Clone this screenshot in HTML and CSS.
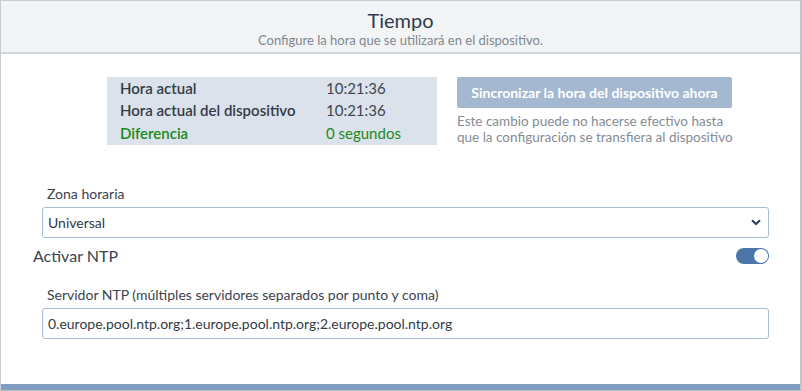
FILE: index.html
```html
<!DOCTYPE html>
<html lang="es">
<head>
  <meta charset="UTF-8">
  <title>Tiempo</title>
  <link rel="stylesheet" href="styles.css">
</head>
<body>

<div class="panel">
  <header class="panel-head">
    <h1>Tiempo</h1>
    <p>Configure la hora que se utilizará en el dispositivo.</p>
  </header>

  <div class="panel-body">
    <!-- Hora -->
    <div class="time-row">
      <table class="time-table">
        <tr><td>Hora actual</td><td>10:21:36</td></tr>
        <tr><td>Hora actual del dispositivo</td><td>10:21:36</td></tr>
        <tr class="diff"><td>Diferencia</td><td>0 segundos</td></tr>
      </table>
      <div class="sync">
        <button class="sync-btn" disabled>Sincronizar la hora del dispositivo ahora</button>
        <p>Este cambio puede no hacerse efectivo hasta<br>que la configuración se transfiera al dispositivo</p>
      </div>
    </div>

    <div class="field">
      <label for="zone">Zona horaria</label>
      <div class="select-wrap">
        <select id="zone">
          <option>Universal</option>
        </select>
        <svg class="caret" width="10" height="7" viewBox="0 0 10 7"><path d="M1 1.2 5 5 9 1.2" fill="none" stroke="#2f3e52" stroke-width="2"/></svg>
      </div>
    </div>

    <div class="ntp-row">
      <span>Activar NTP</span>
      <span class="toggle"><span class="knob"></span></span>
    </div>

    <div class="field">
      <label for="ntp">Servidor NTP (múltiples servidores separados por punto y coma)</label>
      <input type="text" id="ntp" value="0.europe.pool.ntp.org;1.europe.pool.ntp.org;2.europe.pool.ntp.org">
    </div>
  </div>
  <div class="panel-foot"></div>
</div>

</body>
</html>
```

FILE: styles.css
```css
* { margin: 0; padding: 0; box-sizing: border-box; }
body {
  font-family: Lato, "Open Sans", sans-serif;
  background: #fff;
  color: #333b45;
  width: 802px;
  height: 391px;
}
.panel {
  border: 1px solid #c9ccd0;
  border-right: 2px solid #c3c6ca;
  border-bottom: 1px solid #b9bcc0;
  height: 391px;
  display: flex;
  flex-direction: column;
}
.panel-head {
  background: #f2f4f6;
  border-bottom: 2px solid #d4d8dd;
  height: 53px;
  text-align: center;
  padding-top: 7px;
}
.panel-head h1 {
  font-size: 20px;
  font-weight: normal;
  color: #2e3a4b;
  line-height: 24px;
}
.panel-head p {
  font-size: 13px;
  color: #7e8790;
  line-height: 16px;
}
.panel-body {
  flex: 1;
  padding: 23px 31px 0 32px;
}
.time-row {
  display: flex;
  align-items: flex-start;
  padding-left: 74px;
  gap: 20px;
  height: 68px;
}
.time-table {
  background: #dbe2eb;
  width: 330px;
  height: 68px;
  border-collapse: collapse;
  font-size: 15px;
}
.time-table td {
  padding: 0 0 0 13px;
  line-height: 21px;
}
.time-table td:first-child { width: 206px; font-weight: 600; }
.time-table td:last-child { color: #3d4550; }
.time-table .diff td { color: #1a8a1a; }
.sync-btn {
  width: 275px;
  height: 31px;
  background: #a4b8cf;
  color: #fff;
  border: none;
  border-radius: 2px;
  font-family: inherit;
  font-size: 14px;
  font-weight: bold;
}
.sync p {
  font-size: 13.5px;
  color: #858c94;
  line-height: 16px;
  margin-top: 5px;
  white-space: nowrap;
}
.field {
  padding: 0 0 0 9px;
  margin-top: 40px;
}
.field label {
  display: block;
  font-size: 14px;
  color: #3a4350;
  padding-left: 5px;
  margin-bottom: 5px;
}
.select-wrap {
  position: relative;
}
select, input {
  width: 100%;
  height: 31px;
  border: 1px solid #a7bcd4;
  border-radius: 3px;
  background: #fff;
  font-family: inherit;
  font-size: 14px;
  color: #333b45;
  padding: 0 5px;
  appearance: none;
}
.caret {
  position: absolute;
  right: 8px;
  top: 12px;
}
.ntp-row {
  display: flex;
  justify-content: space-between;
  align-items: center;
  font-size: 16px;
  color: #3a4350;
  margin-top: 8px;
}
.toggle {
  width: 33px;
  height: 16px;
  border-radius: 8px;
  background: #4a76a8;
  position: relative;
}
.knob {
  position: absolute;
  right: 1px;
  top: 1px;
  width: 14px;
  height: 14px;
  border-radius: 50%;
  background: #fff;
}
.ntp-row + .field { margin-top: 21px; }
.panel-foot {
  height: 6px;
  background: #7f9ec2;
}
```
